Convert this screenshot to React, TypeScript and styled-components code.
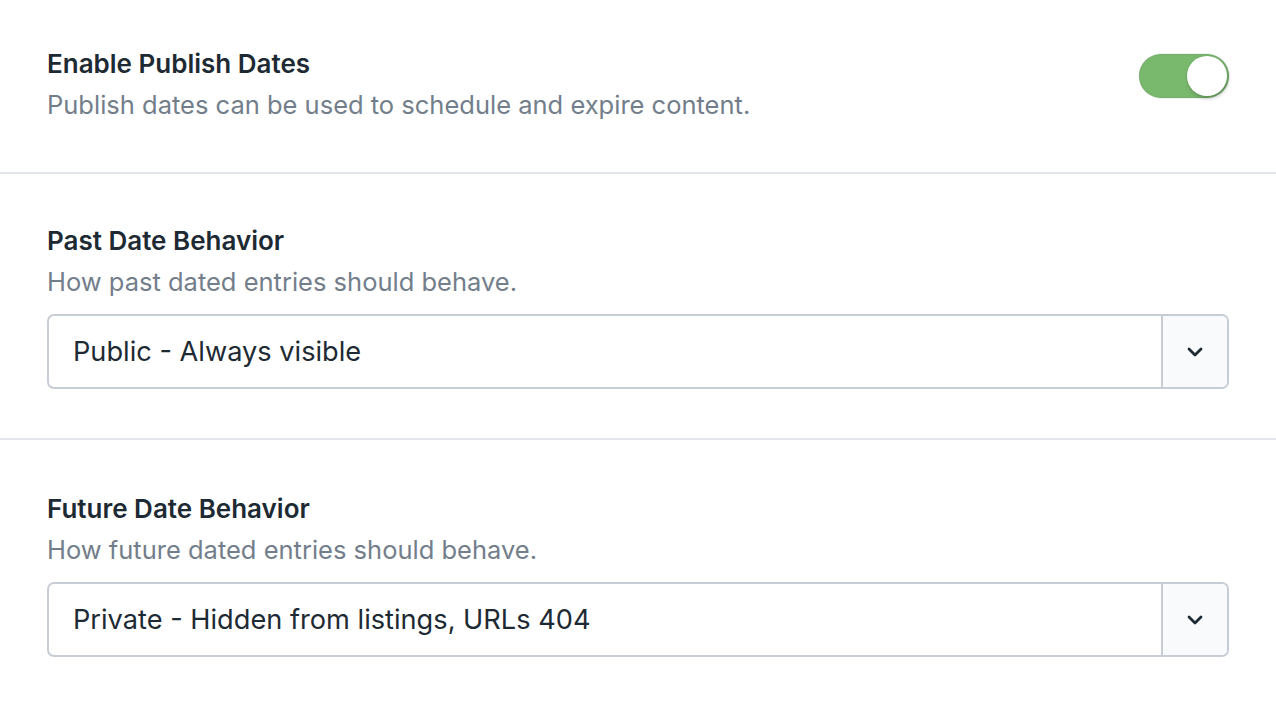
import React from 'react';
import styled, {createGlobalStyle} from 'styled-components';

const GlobalStyle = createGlobalStyle`
    body {
        margin: 0;
        background: #ffffff;
        font-family: Inter, "Noto Sans", sans-serif;
        color: #1e2a33;
    }
`

const options = {
    past: ['Public - Always visible', 'Private - Hidden from listings, URLs 404', 'Unlisted - Hidden from listings, URLs work'],
    future: ['Private - Hidden from listings, URLs 404', 'Public - Always visible', 'Unlisted - Hidden from listings, URLs work'],
};

export default function App() {
    const [enabled, setEnabled] = React.useState(true);

    return (
        <>
            <GlobalStyle/>
            <Page>
                <Section $top={48} $bottom={51}>
                    <ToggleRow>
                        <div>
                            <Title>Enable Publish Dates</Title>
                            <Description>Publish dates can be used to schedule and expire content.</Description>
                        </div>
                        <Toggle $on={enabled} onClick={() => setEnabled(!enabled)} aria-label="Enable Publish Dates">
                            <Knob $on={enabled}/>
                        </Toggle>
                    </ToggleRow>
                </Section>

                <Section $top={51} $bottom={49}>
                    <Title>Past Date Behavior</Title>
                    <Description>How past dated entries should behave.</Description>
                    <Select value={options.past[0]} items={options.past}/>
                </Section>

                <Section $top={53} $bottom={48}>
                    <Title>Future Date Behavior</Title>
                    <Description>How future dated entries should behave.</Description>
                    <Select value={options.future[0]} items={options.future}/>
                </Section>
            </Page>
        </>
    );
}

const Select = ({value, items}: { value: string; items: string[] }) => {
    const [current, setCurrent] = React.useState(value);
    return (
        <SelectBox>
            <NativeSelect value={current} onChange={e => setCurrent(e.target.value)}>
                {items.map(i => <option key={i}>{i}</option>)}
            </NativeSelect>
            <SelectValue>{current}</SelectValue>
            <ChevronBox>
                <svg width="18" height="12" viewBox="0 0 18 12" fill="none">
                    <path d="M3 3l6 6 6-6" stroke="#1e2a33" strokeWidth="2.8" strokeLinecap="round"
                          strokeLinejoin="round"/>
                </svg>
            </ChevronBox>
        </SelectBox>
    );
};

const Page = styled.div`
    width: 1276px;
`

const Section = styled.section<{ $top: number; $bottom: number }>`
    padding: ${p => p.$top}px 47px ${p => p.$bottom}px;
    border-bottom: 2px solid #e2e5ea;

    &:last-child {
        border-bottom: none;
    }
`

const ToggleRow = styled.div`
    display: flex;
    align-items: flex-start;
    justify-content: space-between;
`

const Title = styled.h2`
    margin: 0;
    font-size: 26px;
    line-height: 32px;
    font-weight: 600;
    color: #1e2a33;
`

const Description = styled.p`
    margin: 9px 0 0;
    font-size: 25.5px;
    line-height: 32px;
    font-weight: 400;
    color: #737e8b;
`

const Toggle = styled.button<{ $on: boolean }>`
    position: relative;
    width: 90px;
    height: 44px;
    border: none;
    padding: 0;
    border-radius: 22px;
    background: ${p => p.$on ? '#79b96e' : '#d5d9df'};
    box-shadow: inset 0 0 0 1px rgba(0, 0, 0, 0.06), 0 0 2px rgba(0, 0, 0, 0.15);
    cursor: pointer;
    flex-shrink: 0;
    margin-top: 6px;
`

const Knob = styled.span<{ $on: boolean }>`
    position: absolute;
    top: 2px;
    left: ${p => p.$on ? '48px' : '2px'};
    width: 40px;
    height: 40px;
    border-radius: 50%;
    background: #ffffff;
    box-shadow: 1px 2px 4px rgba(0, 0, 0, 0.25);
`

const SelectBox = styled.div`
    position: relative;
    display: flex;
    align-items: stretch;
    height: 75px;
    margin-top: 16px;
    border: 2px solid #c8cdd5;
    border-radius: 7px;
    box-sizing: border-box;
    background: #ffffff;
    overflow: hidden;
`

const NativeSelect = styled.select`
    position: absolute;
    inset: 0;
    opacity: 0;
    cursor: pointer;
`

const SelectValue = styled.div`
    flex: 1;
    display: flex;
    align-items: center;
    padding-left: 24px;
    font-size: 27.2px;
    color: #1e2a33;
`

const ChevronBox = styled.div`
    width: 64px;
    display: flex;
    align-items: center;
    justify-content: center;
    border-left: 2px solid #c8cdd5;
    background: #f9fafb;
`
